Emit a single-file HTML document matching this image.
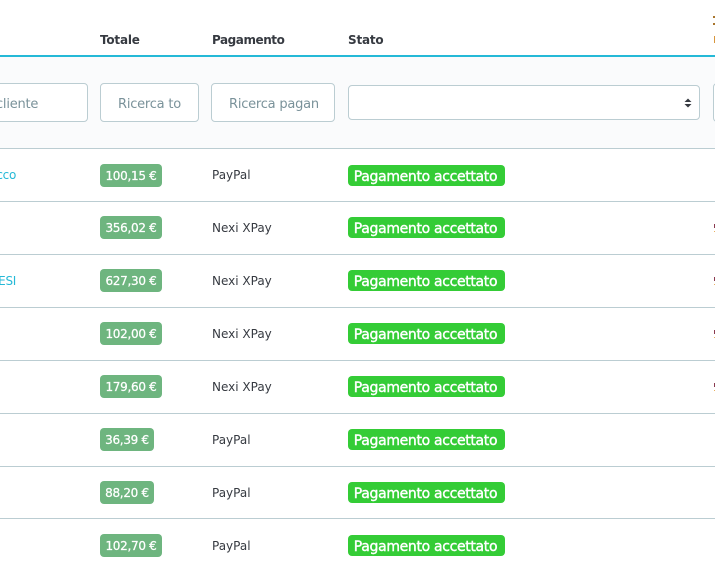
<!DOCTYPE html>
<html><head><meta charset="utf-8">
<style>
html,body{margin:0;padding:0;background:#fff}
body{width:715px;height:567px;position:relative;overflow:hidden;font-family:"DejaVu Sans","Liberation Sans",sans-serif;color:#363a41}
.a{position:absolute;white-space:nowrap}
.th{font-weight:700;font-size:12px;letter-spacing:-.45px;top:32px;line-height:16px;color:#363a41}
.line{position:absolute;left:0;width:715px;height:1px;background:#bbcdd2}
.inp{position:absolute;top:83px;height:37px;border:1px solid #bbcdd2;border-radius:4px;background:#fff;overflow:hidden;font-size:13px;letter-spacing:-.22px;line-height:41px;color:#7a929a;box-sizing:content-box}
.tot{position:absolute;left:100px;height:23px;line-height:24px;background:#6eb57f;border-radius:4px;color:#fff;font-size:12px;letter-spacing:-.3px;text-align:center;-webkit-text-stroke:.25px #fff}
.st{position:absolute;left:348px;width:155px;padding-right:2px;height:21px;line-height:24px;background:#34cc36;border-radius:4px;color:#fff;font-size:14px;letter-spacing:-.33px;text-align:center;-webkit-text-stroke:.4px #fff;white-space:nowrap}
.pay{position:absolute;left:212px;font-size:12px;letter-spacing:0;line-height:16px;color:#363a41}
.lnk{position:absolute;left:-24px;font-size:12px;letter-spacing:-.3px;line-height:16px;color:#25b9d7;width:40px;text-align:right}
.d{position:absolute;left:714px;width:1px;height:4px;background:#8a3a50}
.o{position:absolute;left:714px;width:1px;height:1px;background:#e8b060}
</style></head><body>
<div class="a th" style="left:100px;letter-spacing:-.2px">Totale</div>
<div class="a th" style="left:212px">Pagamento</div>
<div class="a th" style="left:348px;letter-spacing:-.2px">Stato</div>
<div class="a" style="left:713px;top:16px;width:2px;height:2px;background:#a8752c"></div>
<div class="a" style="left:713px;top:23px;width:2px;height:2px;background:#a8752c"></div>
<div class="a" style="left:714px;top:36px;width:1px;height:7px;background:#d8963c"></div>
<div class="a" style="left:0;top:55px;width:715px;height:2px;background:#25b9d7"></div>
<div class="a" style="left:0;top:57px;width:715px;height:91px;background:#fafbfc"></div>
<div class="inp" style="left:-20px;width:106px"><span style="position:absolute;left:15px;top:0">cliente</span></div>
<div class="inp" style="left:100px;width:97px"><span style="position:absolute;left:17px;top:0">Ricerca to</span></div>
<div class="inp" style="left:211px;width:122px"><span style="position:absolute;left:17px;top:0">Ricerca pagan</span></div>
<div class="a" style="left:348px;top:85px;width:350px;height:33px;border:1px solid #bbcdd2;border-radius:4px;background:#fff"></div>
<svg class="a" style="left:683px;top:98px" width="10" height="10" viewBox="0 0 10 10"><path d="M5 0.5L8.5 4H1.5Z M5 9.5L8.5 6H1.5Z" fill="#363a41"/></svg>
<div class="a" style="left:713px;top:83px;width:10px;height:37px;border:1px solid #bbcdd2;border-radius:4px;background:#fff"></div>
<div class="line" style="top:148px"></div><div class="line" style="top:201px"></div><div class="line" style="top:254px"></div><div class="line" style="top:307px"></div><div class="line" style="top:360px"></div><div class="line" style="top:413px"></div><div class="line" style="top:466px"></div><div class="line" style="top:518px"></div>
<div class="lnk" style="top:167px">cco</div>
<div class="lnk" style="top:273px">ESI</div>
<div class="tot" style="top:164px;width:62px">100,15 €</div>
<div class="tot" style="top:216px;width:62px">356,02 €</div>
<div class="tot" style="top:269px;width:62px">627,30 €</div>
<div class="tot" style="top:322px;width:62px">102,00 €</div>
<div class="tot" style="top:375px;width:62px">179,60 €</div>
<div class="tot" style="top:428px;width:54px">36,39 €</div>
<div class="tot" style="top:481px;width:54px">88,20 €</div>
<div class="tot" style="top:534px;width:62px">102,70 €</div>
<div class="pay" style="top:167px">PayPal</div>
<div class="pay" style="top:220px">Nexi XPay</div>
<div class="pay" style="top:273px">Nexi XPay</div>
<div class="pay" style="top:326px">Nexi XPay</div>
<div class="pay" style="top:379px">Nexi XPay</div>
<div class="pay" style="top:432px">PayPal</div>
<div class="pay" style="top:485px">PayPal</div>
<div class="pay" style="top:538px">PayPal</div>
<div class="st" style="top:165px">Pagamento accettato</div>
<div class="st" style="top:217px">Pagamento accettato</div>
<div class="st" style="top:270px">Pagamento accettato</div>
<div class="st" style="top:323px">Pagamento accettato</div>
<div class="st" style="top:376px">Pagamento accettato</div>
<div class="st" style="top:429px">Pagamento accettato</div>
<div class="st" style="top:482px">Pagamento accettato</div>
<div class="st" style="top:535px">Pagamento accettato</div>
<div class="d" style="top:224px"></div><div class="d" style="top:277px"></div><div class="d" style="top:330px"></div><div class="d" style="top:383px"></div>
<div class="o" style="top:231px"></div><div class="o" style="top:284px"></div><div class="o" style="top:337px"></div><div class="o" style="top:390px"></div>
</body></html>
